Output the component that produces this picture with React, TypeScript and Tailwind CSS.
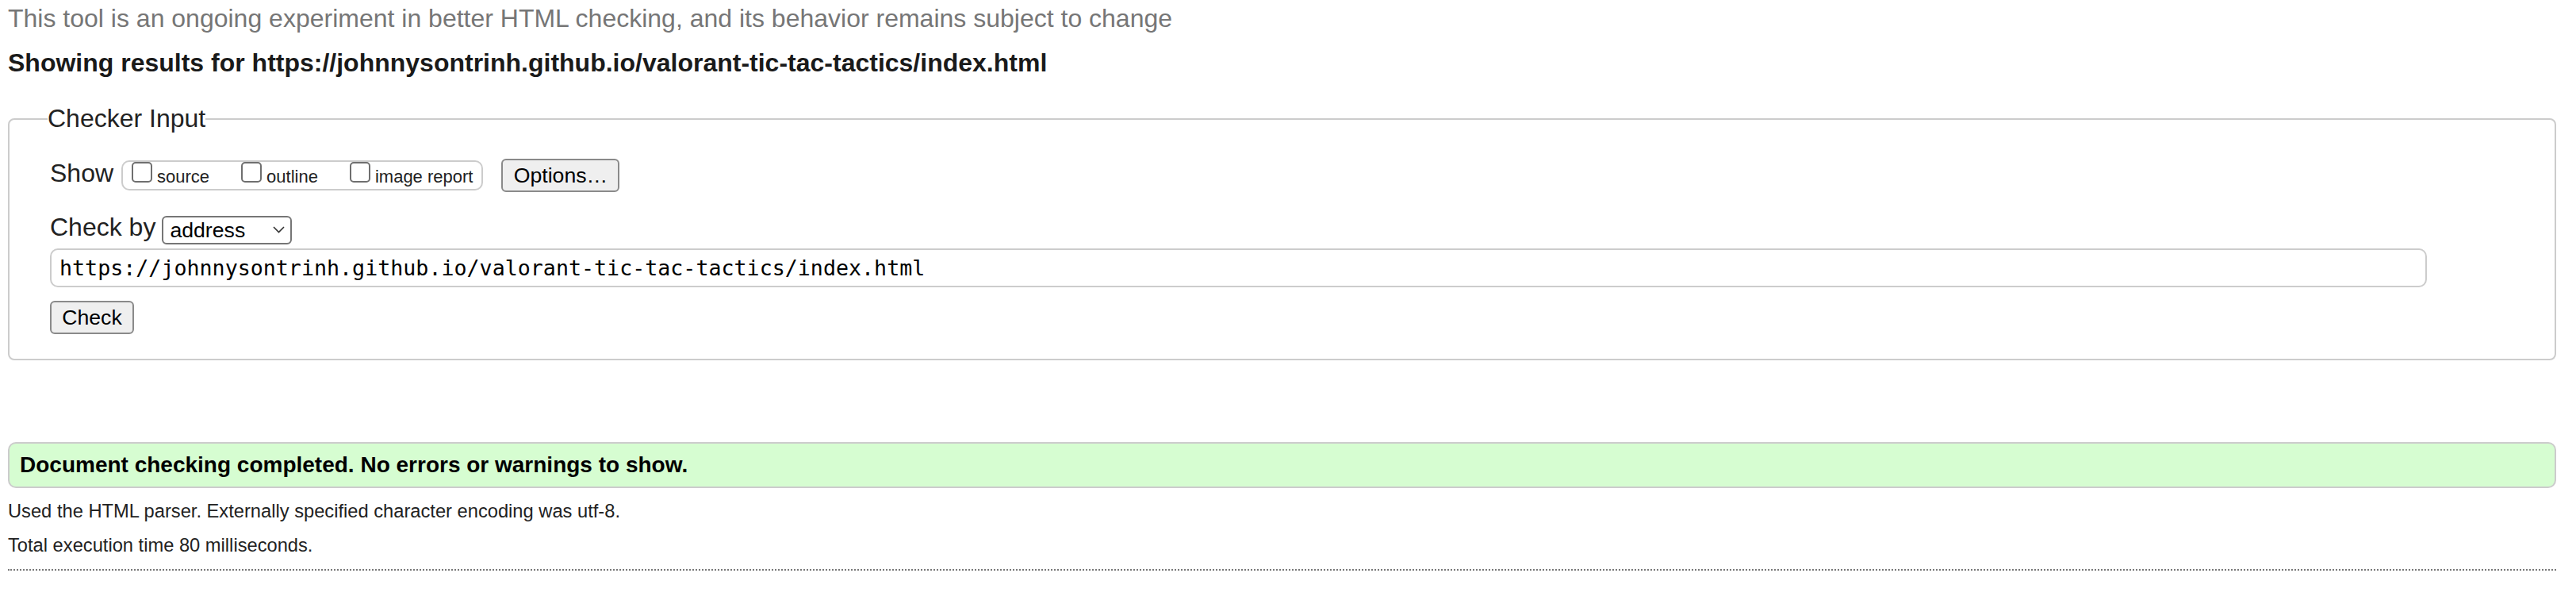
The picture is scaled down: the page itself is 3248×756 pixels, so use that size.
import React from 'react';

const url = 'https://johnnysontrinh.github.io/valorant-tic-tac-tactics/index.html';

function Box({ label }: { label: string }) {
  return (
    <label className="flex items-start gap-[6px]">
      <input
        type="checkbox"
        className="h-[26px] w-[26px] appearance-none rounded-[5px] border-2 border-[#6f6f6f] bg-white"
      />
      <span className="mt-[6px] text-[22px] leading-[25px] text-[#222]">{label}</span>
    </label>
  );
}

export default function App() {
  return (
    <div className="min-h-screen bg-white pl-[10px] pr-[25px] font-['Liberation_Sans',Arial,sans-serif] text-[#222]">
      <p className="pt-[5px] text-[32px] leading-[37px] text-[#767676]">
        This tool is an ongoing experiment in better HTML checking, and its behavior remains subject to change
      </p>
      <h2 className="mt-[19px] text-[32px] font-bold leading-[37px] text-[#1a1a1a]">
        Showing results for {url}
      </h2>

      <fieldset className="mt-[33px] rounded-[8px] border-2 border-[#cccccc] px-[51px] pb-[31px] pt-[32px]">
        <legend className="-ml-[3px] text-[32px] leading-[37px]">Checker Input</legend>

        {/* show options */}
        <div className="flex items-start">
          <span className="text-[32px] leading-[37px]">Show</span>
          <div className="ml-[10px] mt-[2px] flex h-[38px] items-start gap-[40px] rounded-[10px] border-2 border-[#cccccc] px-[11px]">
            <Box label="source" />
            <Box label="outline" />
            <Box label="image report" />
          </div>
          <button
            type="button"
            className="ml-[23px] h-[42px] w-[149px] rounded-[6px] border-2 border-[#8a8a8a] bg-[#efefef] text-[26.67px] leading-[30px] text-black"
          >
            Options…
          </button>
        </div>

        {/* check by */}
        <div className="mt-[26px] flex items-start">
          <span className="text-[32px] leading-[37px]">Check by</span>
          <div className="relative ml-[8px] mt-[4px] h-[36px] w-[164px]">
            <select
              defaultValue="address"
              className="h-full w-full appearance-none rounded-[6px] border-2 border-[#767676] bg-white pl-[8px] text-[26.67px] leading-[30px] text-black outline-none"
            >
              <option value="address">address</option>
              <option value="file">file upload</option>
              <option value="text">text input</option>
            </select>
            <svg
              className="pointer-events-none absolute right-[9px] top-[13px]"
              width="15"
              height="9"
              viewBox="0 0 15 9"
              fill="none"
            >
              <path d="M1 1l6.5 6.5L14 1" stroke="#333" strokeWidth="1.6" />
            </svg>
          </div>
        </div>

        <input
          type="text"
          readOnly
          value={url}
          className="mt-[5px] block h-[49px] w-[2997px] rounded-[10px] border-2 border-[#cccccc] pl-[10px] font-['DejaVu_Sans_Mono',monospace] text-[26.67px] text-black outline-none"
        />

        <button
          type="button"
          className="mt-[17px] block h-[42px] w-[106px] rounded-[6px] border-2 border-[#8a8a8a] bg-[#efefef] text-[26.67px] leading-[30px] text-black"
        >
          Check
        </button>
      </fieldset>

      <div className="mt-[103px] flex h-[58px] items-center rounded-[10px] border-2 border-[#cccccc] bg-[#d6fdd1] pl-[13px] text-[28px] font-bold leading-[32px] text-black">
        Document checking completed. No errors or warnings to show.
      </div>

      <p className="mt-[15px] text-[23.7px] leading-[28px]">
        Used the HTML parser. Externally specified character encoding was utf-8.
      </p>
      <p className="mt-[15px] text-[23.7px] leading-[28px]">Total execution time 80 milliseconds.</p>
      <hr className="mt-[16px] border-0 border-t-2 border-dotted border-[#777]" />
    </div>
  );
}
